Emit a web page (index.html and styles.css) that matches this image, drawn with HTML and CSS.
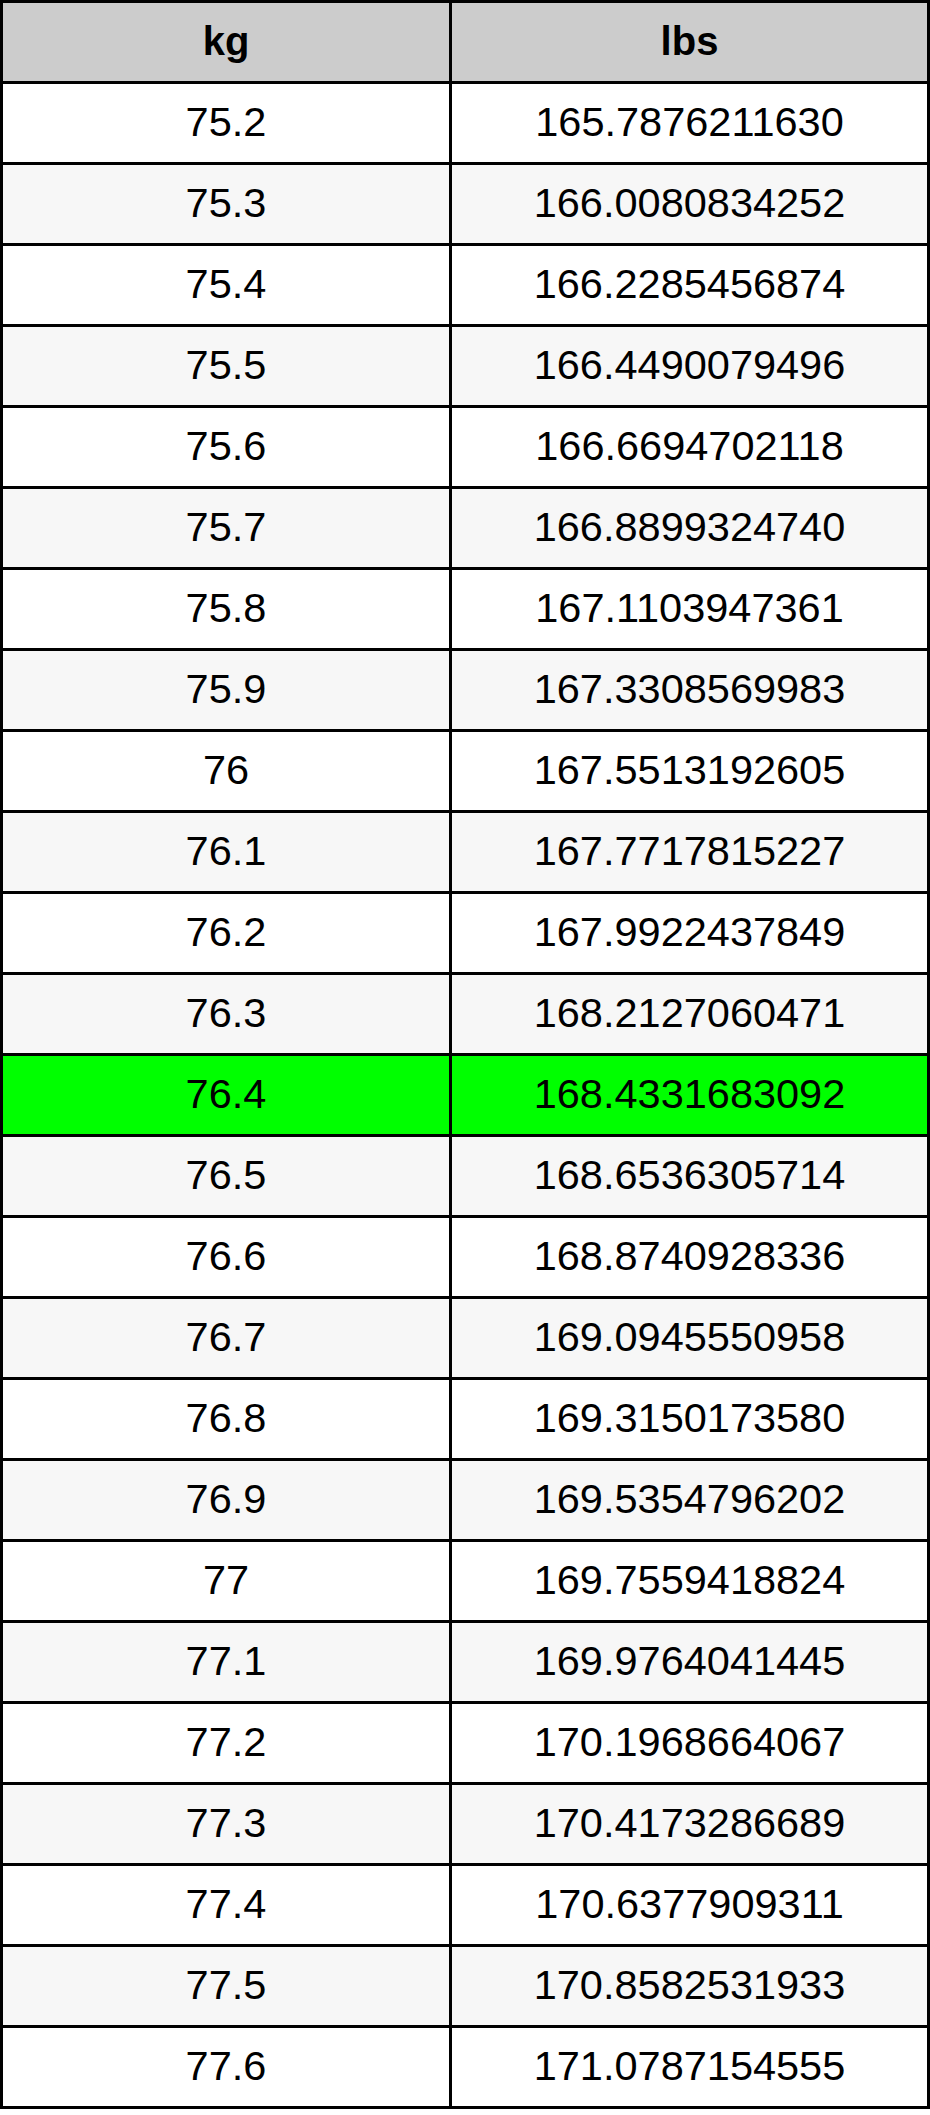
FILE: index.html
```html
<!DOCTYPE html>
<html lang="en">
<head>
<meta charset="utf-8">
<title>kg to lbs</title>
<link rel="stylesheet" href="styles.css">
</head>
<body>
<table class="conv">
<colgroup><col class="c-kg"><col class="c-lbs"></colgroup>
<thead>
<tr><th>kg</th><th>lbs</th></tr>
</thead>
<tbody>
<tr><td>75.2</td><td>165.7876211630</td></tr>
<tr><td>75.3</td><td>166.0080834252</td></tr>
<tr><td>75.4</td><td>166.2285456874</td></tr>
<tr><td>75.5</td><td>166.4490079496</td></tr>
<tr><td>75.6</td><td>166.6694702118</td></tr>
<tr><td>75.7</td><td>166.8899324740</td></tr>
<tr><td>75.8</td><td>167.1103947361</td></tr>
<tr><td>75.9</td><td>167.3308569983</td></tr>
<tr><td>76</td><td>167.5513192605</td></tr>
<tr><td>76.1</td><td>167.7717815227</td></tr>
<tr><td>76.2</td><td>167.9922437849</td></tr>
<tr><td>76.3</td><td>168.2127060471</td></tr>
<tr class="hl"><td>76.4</td><td>168.4331683092</td></tr>
<tr><td>76.5</td><td>168.6536305714</td></tr>
<tr><td>76.6</td><td>168.8740928336</td></tr>
<tr><td>76.7</td><td>169.0945550958</td></tr>
<tr><td>76.8</td><td>169.3150173580</td></tr>
<tr><td>76.9</td><td>169.5354796202</td></tr>
<tr><td>77</td><td>169.7559418824</td></tr>
<tr><td>77.1</td><td>169.9764041445</td></tr>
<tr><td>77.2</td><td>170.1968664067</td></tr>
<tr><td>77.3</td><td>170.4173286689</td></tr>
<tr><td>77.4</td><td>170.6377909311</td></tr>
<tr><td>77.5</td><td>170.8582531933</td></tr>
<tr><td>77.6</td><td>171.0787154555</td></tr>
</tbody>
</table>
</body>
</html>
```
FILE: styles.css
```css
html, body {
  margin: 0;
  padding: 0;
  background: #ffffff;
}

.conv {
  border-collapse: separate;
  border-spacing: 0;
  table-layout: fixed;
  width: 930px;
  border-top: 3px solid #000;
  border-left: 3px solid #000;
  font-family: "Liberation Sans", Arial, Helvetica, sans-serif;
  color: #000;
}

.c-kg { width: 449px; }
.c-lbs { width: 478px; }

.conv tr { height: 81px; }

.conv th,
.conv td {
  padding: 0 0 2px 0;
  border-right: 3px solid #000;
  border-bottom: 3px solid #000;
  text-align: center;
  vertical-align: middle;
  line-height: 1.15;
}

.conv th {
  background: #cccccc;
  font-weight: bold;
  font-size: 40px;
}

.conv td {
  font-size: 41.5px;
  font-weight: normal;
  background: #ffffff;
}

.conv tbody tr:nth-child(even) td {
  background: #f7f7f7;
}

.conv tbody tr.hl td {
  background: #00ff00;
}
```
